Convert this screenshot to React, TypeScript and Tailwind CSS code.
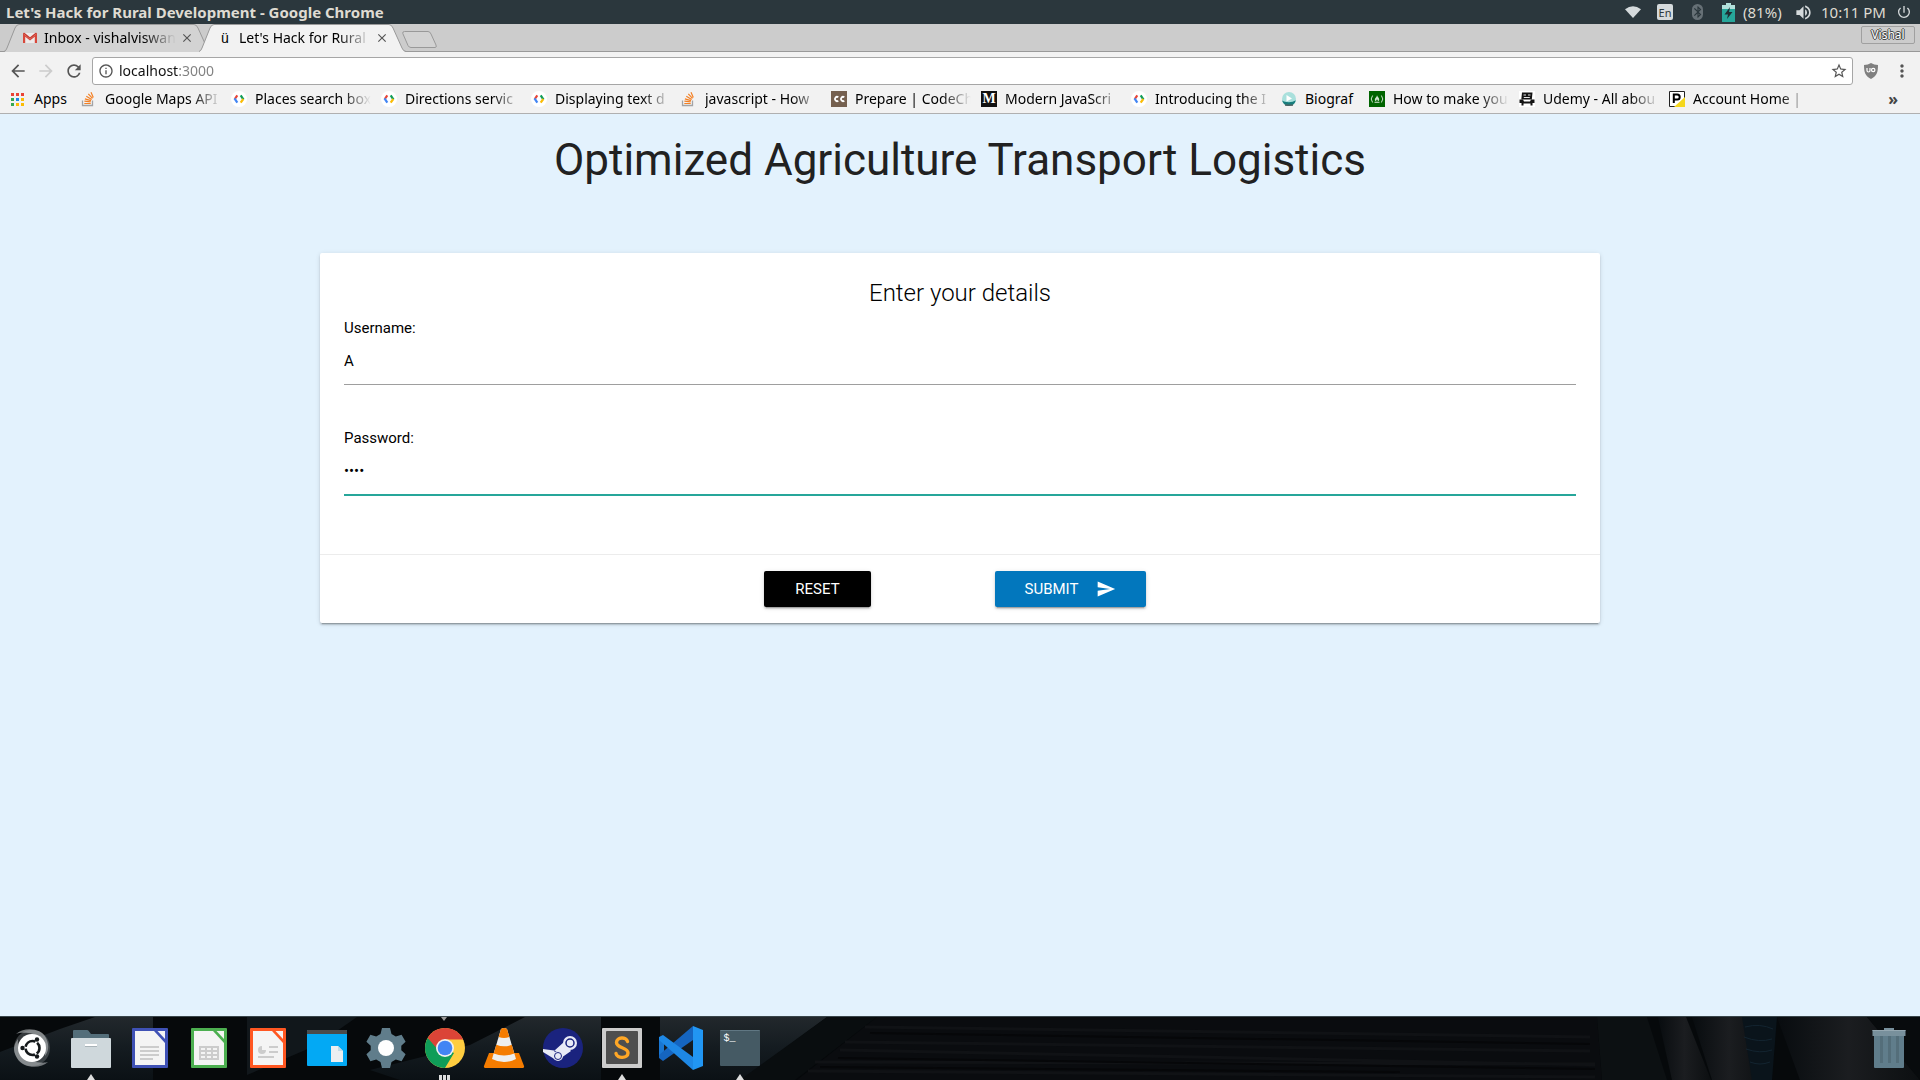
import React, { useState } from "react";
import type { ReactNode } from "react";
import {
  MdArrowBack,
  MdArrowForward,
  MdBluetooth,
  MdClose,
  MdInfoOutline,
  MdMoreVert,
  MdPowerSettingsNew,
  MdRefresh,
  MdSend,
  MdStarBorder,
  MdVolumeUp,
} from "react-icons/md";

/* ---------- Favicons ---------- */

const GmailIcon = () => (
  <svg viewBox="0 0 16 16" className="size-4 shrink-0" aria-hidden="true">
    <path d="M2 3h12v10H2z" fill="#eceaea" />
    <path d="M1 3.5 8 9l7-5.500V13h-2.200V6.800L8 10.600 3.200 6.800V13H1z" fill="#d8483b" />
    <path d="M1 3.500C1 2.600 2 2.400 2.700 3L8 7.200 13.300 3C14 2.400 15 2.600 15 3.500L8 9z" fill="#c9392d" />
  </svg>
);

const StackIcon = () => (
  <svg viewBox="0 0 16 16" className="size-4 shrink-0" fill="none" aria-hidden="true">
    <path d="M1.500 9.500v5h10v-5" stroke="#a3a3a5" strokeWidth="1.300" />
    <path
      d="M3.300 12.500h6.400M3.400 10.200l6.300.700M3.900 7.800l6.100 1.800M5.300 5.300l5.400 3.200M7.300 2.800l4.200 4.600M10 1.300l2.300 5.300"
      stroke="#f48024"
      strokeWidth="1.200"
    />
  </svg>
);

const GoogleDevIcon = () => (
  <svg viewBox="0 0 16 16" className="size-4 shrink-0" fill="none" aria-hidden="true">
    <circle cx="8" cy="8" r="8" fill="#fff" />
    <path d="M6.300 4.300 3.800 8" stroke="#ea4335" strokeWidth="2.200" />
    <path d="M3.500 7.300l2.800 4.400" stroke="#4285f4" strokeWidth="2.200" />
    <path d="M9.700 4.300 12.500 8.600" stroke="#109d58" strokeWidth="2.200" />
    <path d="M12.300 8 9.700 11.700" stroke="#fbbc05" strokeWidth="2.200" />
  </svg>
);

const CodeChefIcon = () => (
  <svg viewBox="0 0 16 16" className="size-4 shrink-0" fill="none" aria-hidden="true">
    <path d="M0 0h16v16H0z" fill="#75604f" />
    <path d="M7.300 6.300a2.100 2.100 0 1 0 0 3.400M13.300 6.300a2.100 2.100 0 1 0 0 3.400" stroke="#fff" strokeWidth="1.800" />
  </svg>
);

const MediumIcon = () => (
  <span className="flex size-4 shrink-0 items-center justify-center bg-[#111] font-['Liberation_Serif',serif] text-sm leading-none font-bold text-white">
    M
  </span>
);

const BiografIcon = () => (
  <svg viewBox="0 0 16 16" className="size-4 shrink-0" aria-hidden="true">
    <circle cx="8" cy="8" r="7" fill="#a9e0dc" />
    <path d="M1.200 9.500C4 11.500 11 12 14.800 9.300 14 13 11 15 8 15s-6-2-6.800-5.500z" fill="#187d7c" />
    <path d="M5.500 4v6.500L11 7.500z" fill="#fff" />
    <path d="M4 13.500h8v1.300H4z" fill="#55605f" />
  </svg>
);

const FreeCodeCampIcon = () => (
  <svg viewBox="0 0 16 16" className="size-4 shrink-0" fill="none" aria-hidden="true">
    <path d="M0 0h16v16H0z" fill="#006400" />
    <path d="M3.600 4.500Q.800 8 3.600 11.500M12.400 4.500Q15.200 8 12.400 11.500M5.500 11.300h5" stroke="#cfe3cf" strokeWidth="1" />
    <path d="M8 4.300c.300 1.700 2.200 2.300 2.200 4.200 0 1-.800 1.800-1.500 2 .5-1-.2-1.700-.7-2.200-.3.800-1.200 1.200-.7 2.200-.8-.2-1.500-1-1.500-2C5.800 6.900 8 6.300 8 4.300z" fill="#cfe3cf" />
  </svg>
);

const LaptopFaceIcon = () => (
  <svg viewBox="0 0 16 16" className="size-4 shrink-0" aria-hidden="true">
    <path d="M0 0h16v16H0z" fill="#fff" />
    <path d="M3 1.500h10.500l-.7 7H2.300z" fill="#141414" />
    <path d="M4.500 4h2.500M9 4h2.500M4.800 6.500h6" stroke="#fff" strokeWidth=".9" />
    <path d="M.5 8.500H4l1 2h6l1-2h3.500v3.500h-2v2.500h-2V12.500h-7v2h-2V12h-2z" fill="#141414" />
  </svg>
);

const ParkingIcon = () => (
  <svg viewBox="0 0 16 16" className="size-4 shrink-0" aria-hidden="true">
    <path d="M.5.5h15v15H.5z" fill="#fff" stroke="#222" />
    <path d="M16 6v10H5z" fill="#f5d71c" />
    <path d="M4.800 12V3.500h3.400a2.400 2.400 0 0 1 0 5H4.800" fill="none" stroke="#000" strokeWidth="2" />
  </svg>
);

const AppsIcon = () => (
  <svg viewBox="0 0 13 13" className="size-[13px] shrink-0" aria-hidden="true">
    <path d="M0 0h3v3H0zM5 0h3v3H5zM10 0h3v3h-3z" fill="#ea4335" />
    <path d="M0 5h3v3H0z" fill="#34a853" />
    <path d="M5 5h3v3H5z" fill="#1e88e5" />
    <path d="M10 5h3v3h-3zM5 10h3v3H5zM10 10h3v3h-3z" fill="#fbbc05" />
    <path d="M0 10h3v3H0z" fill="#34a853" />
  </svg>
);

/* ---------- System bar ---------- */

const SystemBar = () => (
  <header className="flex h-6 items-center justify-between bg-[#2b373d] pr-2 pl-1.5 text-[#dfdbd2]">
    <h1 className="text-[15px] leading-6 font-bold whitespace-nowrap">Let's Hack for Rural Development - Google Chrome</h1>
    <div className="flex items-center text-[15px] leading-6 whitespace-nowrap">
      <svg viewBox="0 0 16 12" className="mr-4 h-3 w-4" fill="#d5dadc" role="img" aria-label="Wi-Fi">
        <path d="M8 12 0 3.200Q8-2.800 16 3.200z" />
      </svg>
      <span className="mr-[19px] flex size-4 items-center justify-center rounded-[2px] bg-[#d5dadc] text-[11px] leading-none text-[#2b373d]">
        En
      </span>
      <span className="mr-[19px] flex h-4 w-[11px] items-center justify-center rounded-full bg-[#667076]">
        <MdBluetooth className="size-3.5 shrink-0 text-[#2b373d]" />
      </span>
      <svg viewBox="0 0 13 19" className="mr-2 h-[19px] w-[13px]" role="img" aria-label="Battery">
        <path d="M4 0h5v2h4v17H0V2h4z" fill="#26a69a" />
        <path d="M4 0h5v2h4v4H0V2h4z" fill="#b2dfdb" />
        <path d="M8 4 2.500 11.500H6L5 16l5.500-7H7z" fill="#1f2d33" />
      </svg>
      <span className="w-[39px]">(81%)</span>
      <MdVolumeUp className="mr-2 ml-3 size-[19px] text-[#d5dadc]" />
      <span className="w-[65px]">10:11 PM</span>
      <MdPowerSettingsNew className="ml-2.5 size-4 text-[#d5dadc]" />
    </div>
  </header>
);

/* ---------- Browser chrome ---------- */

type TabProps = { title: string; icon: ReactNode; active?: boolean };

const Tab = ({ title, icon, active = false }: TabProps) => (
  <div className={active ? "relative z-10 -ml-3 h-7 w-[207px]" : "relative h-7 w-[207px]"}>
    <svg viewBox="0 0 207 28" className="absolute inset-0 h-7 w-full" aria-hidden="true">
      <path
        d="M0 28Q2 27 3 24L11 4Q12.500.500 15 .5H190Q192.500.500 194 4L203 24Q204 27 207 28z"
        fill={active ? "#f2f2f2" : "#d3d3d3"}
      />
      <path
        d="M0 27.500Q2 27 3 24L11 4Q12.500.500 15 .5H190Q192.500.500 194 4L203 24Q204 27 207 27.500"
        fill="none"
        stroke="#999"
      />
    </svg>
    <div className="relative flex h-7 items-center pr-[17px] pl-[18px]">
      <span className="flex w-[22px] shrink-0 items-center">{icon}</span>
      <button
        role="tab"
        aria-selected={active}
        className="min-w-0 flex-1 overflow-hidden text-left text-sm leading-6 whitespace-nowrap text-black [mask-image:linear-gradient(to_right,#000_75%,transparent)]"
      >
        {title}
      </button>
      <button aria-label={`Close ${title}`} className="ml-1 shrink-0 text-[#555]">
        <MdClose className="size-3.5" />
      </button>
    </div>
  </div>
);

const TabStrip = () => (
  <div className="flex h-7 items-start justify-between bg-[#ccc] shadow-[inset_0_-1px_0_#999]">
    <div role="tablist" className="flex pl-1">
      <Tab title="Inbox - vishalviswan" icon={<GmailIcon />} />
      <Tab
        active
        title="Let's Hack for Rural"
        icon={<span className="w-4 text-center font-['Liberation_Sans',sans-serif] text-sm leading-none">ü</span>}
      />
      <button aria-label="New tab" className="mt-[7px] -ml-1 h-[17px] w-[35px]">
        <svg viewBox="0 0 35 17" className="h-full w-full" aria-hidden="true">
          <path d="M2.500.500H26Q28 .5 29 3L34 14Q35 16.500 33 16.500H9Q7 16.500 6 14.500L.8 2.500Q.3.500 2.500.500z" fill="#d2d2d2" stroke="#999" />
        </svg>
      </button>
    </div>
    <button className="mt-0.5 mr-[5px] h-[18px] w-[54px] rounded-[2px] border border-[#a0a0a0] text-xs leading-4 text-white [text-shadow:1px_0_#444,-1px_0_#444,0_1px_#444,0_-1px_#444]">
      Vishal
    </button>
  </div>
);

const Toolbar = () => {
  const [address, setAddress] = useState("localhost:3000");
  return (
    <div className="flex h-[38px] items-center bg-[#f2f2f2] px-2 text-[#555]">
      <button aria-label="Back" className="mr-2">
        <MdArrowBack className="size-5" />
      </button>
      <button aria-label="Forward" disabled className="mr-2 text-[#ccc]">
        <MdArrowForward className="size-5" />
      </button>
      <button aria-label="Reload" className="mr-2">
        <MdRefresh className="size-5" />
      </button>
      <div className="flex h-7 min-w-0 flex-1 items-center rounded-[3px] border border-[#a6a6a6] bg-white pr-1 pl-[5px]">
        <MdInfoOutline className="mr-1 size-4 shrink-0" />
        <input
          aria-label="Address"
          value={address}
          onChange={(event) => setAddress(event.target.value)}
          spellCheck={false}
          className="min-w-0 flex-1 bg-[linear-gradient(to_right,#111_60px,#808080_60px)] bg-clip-text pl-px text-sm leading-6 text-transparent caret-black outline-none"
        />
        <button aria-label="Bookmark this page">
          <MdStarBorder className="size-[18px]" />
        </button>
      </div>
      <button aria-label="Shield extension" className="mr-3.5 ml-[11px]">
        <svg viewBox="0 0 14 16" className="h-4 w-3.5" fill="none" aria-hidden="true">
          <path d="M7 0q3 2 7 2c0 7-1 11-7 14C1 13 0 9 0 2q4 0 7-2z" fill="#808080" />
          <path d="M3 5v2.500a1.500 1.500 0 0 0 3 0V5" stroke="#fff" strokeWidth="1.200" />
          <circle cx="9.200" cy="7" r="1.700" stroke="#fff" strokeWidth="1.200" />
        </svg>
      </button>
      <button aria-label="Menu">
        <MdMoreVert className="size-5" />
      </button>
    </div>
  );
};

const bookmarks: { label: string; icon: ReactNode; short?: boolean }[] = [
  { label: "Google Maps API", icon: <StackIcon /> },
  { label: "Places search box", icon: <GoogleDevIcon /> },
  { label: "Directions servic", icon: <GoogleDevIcon /> },
  { label: "Displaying text d", icon: <GoogleDevIcon /> },
  { label: "javascript - How", icon: <StackIcon /> },
  { label: "Prepare | CodeCh", icon: <CodeChefIcon /> },
  { label: "Modern JavaScri", icon: <MediumIcon /> },
  { label: "Introducing the I", icon: <GoogleDevIcon /> },
  { label: "Biograf", icon: <BiografIcon />, short: true },
  { label: "How to make you", icon: <FreeCodeCampIcon /> },
  { label: "Udemy - All abou", icon: <LaptopFaceIcon /> },
  { label: "Account Home |", icon: <ParkingIcon /> },
];

const BookmarksBar = () => (
  <nav
    aria-label="Bookmarks"
    className="flex h-6 items-start border-b border-[#b0b0b0] bg-[#f2f2f2] pr-[22px] pl-[11px] text-sm leading-[18px] whitespace-nowrap text-black"
  >
    <a href="#apps" className="flex w-[70px] shrink-0 items-center gap-2.5">
      <AppsIcon />
      Apps
    </a>
    <div className="flex min-w-0 flex-1 overflow-hidden">
      {bookmarks.map(({ label, icon, short }) => (
        <a
          key={label}
          href="#bookmark"
          className={
            short
              ? "flex w-[88px] shrink-0 items-center gap-2"
              : "flex w-[150px] shrink-0 items-center gap-2 pr-2.5"
          }
        >
          {icon}
          <span
            className={
              short
                ? "shrink-0"
                : "min-w-0 flex-1 overflow-hidden [mask-image:linear-gradient(to_right,#000_75%,transparent)]"
            }
          >
            {label}
          </span>
        </a>
      ))}
    </div>
    <button aria-label="More bookmarks" className="text-base leading-[18px] font-bold text-[#444]">
      »
    </button>
  </nav>
);

/* ---------- Page ---------- */

const LoginCard = () => {
  const [username, setUsername] = useState("A");
  const [password, setPassword] = useState("1234");
  const reset = () => {
    setUsername("");
    setPassword("");
  };
  return (
    <form
      onSubmit={(event) => event.preventDefault()}
      className="mx-auto w-2/3 rounded-[2px] bg-white text-[15px] text-black shadow-[0_2px_2px_0_rgba(0,0,0,0.14),0_1px_5px_0_rgba(0,0,0,0.12),0_3px_1px_-2px_rgba(0,0,0,0.2)]"
    >
      <div className="px-6 pt-6 pb-[58px]">
        <h3 className="mb-2 text-center text-2xl leading-8 font-light">Enter your details</h3>
        <label htmlFor="username" className="block leading-[22px]">
          Username:
        </label>
        <input
          id="username"
          type="text"
          value={username}
          onChange={(event) => setUsername(event.target.value)}
          className="mb-[42px] block h-[46px] w-full border-b border-[#9e9e9e] pb-0.5 outline-none"
        />
        <label htmlFor="password" className="block leading-[22px]">
          Password:
        </label>
        <input
          id="password"
          type="password"
          value={password}
          onChange={(event) => setPassword(event.target.value)}
          className="block h-[47px] w-full border-b-2 border-[#26a69a] pb-0.5 outline-none"
        />
      </div>
      <div className="flex justify-center gap-[124px] border-t border-[rgba(160,160,160,0.2)] py-4 pr-[34px] pl-6 text-white">
        <button
          type="button"
          onClick={reset}
          className="h-9 w-[107px] rounded-[2px] bg-black uppercase shadow-[0_2px_2px_0_rgba(0,0,0,0.14),0_1px_5px_0_rgba(0,0,0,0.12),0_3px_1px_-2px_rgba(0,0,0,0.2)]"
        >
          Reset
        </button>
        <button
          type="submit"
          className="flex h-9 w-[151px] items-center justify-center gap-[18px] rounded-[2px] bg-[#0277bd] uppercase shadow-[0_2px_2px_0_rgba(0,0,0,0.14),0_1px_5px_0_rgba(0,0,0,0.12),0_3px_1px_-2px_rgba(0,0,0,0.2)]"
        >
          Submit
          <MdSend className="size-5" />
        </button>
      </div>
    </form>
  );
};

/* ---------- Dock ---------- */

const LauncherIcon = () => (
  <svg viewBox="0 0 48 48" className="size-12" fill="none">
    <circle cx="24" cy="24" r="18" fill="#8b9194" opacity=".35" />
    <path d="M8 10C15 3 33 3 38 14c4 8 2 14-1 18 1-12-3-19-12-22C17 8 11 9 8 10z" fill="#c4c8ca" opacity=".55" />
    <path d="M40 38C33 45 15 45 9 34 4 26 6 20 10 15c-1 12 3 19 13 22 8 2 14 2 17 1z" fill="#c4c8ca" opacity=".55" />
    <circle cx="24" cy="24" r="14" fill="#fff" />
    <circle cx="24.500" cy="24" r="7" stroke="#15191b" strokeWidth="2.600" strokeDasharray="12.700 2" strokeDashoffset="6.300" />
    <circle cx="14.500" cy="24" r="2.200" fill="#15191b" />
    <circle cx="29" cy="15.500" r="2.200" fill="#15191b" />
    <circle cx="29" cy="32.500" r="2.200" fill="#15191b" />
  </svg>
);

const FilesIcon = () => (
  <svg viewBox="0 0 48 48" className="size-12">
    <path d="M6 7q0-1 1-1h13q1 0 1.500.800L24 10h17q1 0 1 1v9H6z" fill="#546e7a" />
    <path d="M5 14h38q1 0 1 1v28q0 1-1 1H5q-1 0-1-1V15q0-1 1-1z" fill="#cfd8dc" />
    <path d="M18 20h12v2.500H18z" fill="#fff" />
    <path d="M18 22h12v1H18z" fill="#a9b3b8" />
  </svg>
);

const OfficeIcon = ({ color, children }: { color: string; children: ReactNode }) => (
  <svg viewBox="0 0 48 48" className="size-12">
    <rect x="6" y="4" width="36" height="40" rx="1" fill={color} />
    <path d="M9 7h19l11 12v22H9z" fill="#f4f4f4" />
    <path d="M31.500 7H39v8z" fill="#f4f4f4" />
    {children}
  </svg>
);

const WindowFileIcon = () => (
  <svg viewBox="0 0 48 48" className="size-12">
    <rect x="4" y="6" width="40" height="36" rx="1" fill="#03a9f4" />
    <path d="M4 7q0-1 1-1h38q1 0 1 1v3H4z" fill="#4b4b4b" />
    <path d="M28 22h7l5 5v11H28z" fill="#eceff1" />
    <path d="M35 22l5 5h-5z" fill="#c3dbe6" />
  </svg>
);

const SettingsIcon = () => (
  <svg viewBox="0 0 48 48" className="size-12">
    <path
      d="M20 4h8l1.500 6 4.300 2.400 5.800-1.700 4 7-4.300 4.100v4.400l4.300 4.100-4 7-5.800-1.700L29.500 38 28 44h-8l-1.500-6-4.300-2.400-5.800 1.700-4-7 4.300-4.100v-4.400l-4.300-4.100 4-7 5.800 1.700L18.500 10z"
      fill="#607d8b"
    />
    <circle cx="24" cy="24" r="8" fill="#fff" />
  </svg>
);

const ChromeIcon = () => (
  <svg viewBox="0 0 48 48" className="size-12">
    <circle cx="24" cy="24" r="20" fill="#ffcd40" />
    <path d="M24 24 6.700 14A20 20 0 0 0 24 44l9-15z" fill="#0f9d58" />
    <path d="M6.700 14A20 20 0 0 1 42.200 15.500H24l-9 8z" fill="#db4437" />
    <circle cx="24" cy="24" r="9" fill="#f1f1f1" />
    <circle cx="24" cy="24" r="7.300" fill="#4285f4" />
  </svg>
);

const VlcIcon = () => (
  <svg viewBox="0 0 48 48" className="size-12">
    <path d="M9 29h30l5 13q.5 2-1.500 2h-37Q3.500 44 4 42z" fill="#f57c00" />
    <path d="M21 5q3-2 6 0l9 30q-12 6-24 0z" fill="#eee" />
    <path d="M21 5q3-2 6 0l2.300 8q-5.300 2-10.600 0zM16.300 20.800q7.700 3 15.400 0l2.600 8.700q-10.300 4-20.600 0z" fill="#f57c00" />
  </svg>
);

const SteamIcon = () => (
  <svg viewBox="0 0 48 48" className="size-12">
    <circle cx="24" cy="24" r="20" fill="#1a237e" />
    <path d="M4 25v3l13 8 4-8-6-1.500zM15 27 25 18l7 9-10 7z" fill="#e8eaf6" />
    <circle cx="19" cy="32" r="5" fill="#e8eaf6" />
    <circle cx="19" cy="32" r="3.500" fill="none" stroke="#1a237e" strokeWidth="1" />
    <circle cx="31" cy="19" r="7" fill="#e8eaf6" />
    <circle cx="31" cy="19" r="4" fill="#e8eaf6" stroke="#1a237e" strokeWidth="1.500" />
  </svg>
);

const SublimeIcon = () => (
  <svg viewBox="0 0 48 48" className="size-12">
    <rect x="4" y="4" width="40" height="40" rx="1" fill="#ccc" />
    <rect x="8" y="7" width="32" height="33" rx="1" fill="#4e4e4e" />
    <path
      d="M29.500 17.500C28.500 12.500 18.500 13 18.500 18.500c0 6 11.500 4.500 11.500 10.500 0 5.500-11 6-12 .5"
      fill="none"
      stroke="#ffa726"
      strokeWidth="3.400"
      strokeLinecap="round"
    />
  </svg>
);

const VsCodeIcon = () => (
  <svg viewBox="0 0 48 48" className="size-12">
    <path d="M2 13l5 4v14l-5 3z" fill="#1976d2" />
    <path d="M36 2v14L6 37l-4-3v-3z" fill="#1565c0" />
    <path d="M2 13 6 11 36 33V46L2 16z" fill="#1e88e5" />
    <path d="M36 2l10 4v36l-10 4z" fill="#2196f3" />
  </svg>
);

const TerminalIcon = () => (
  <span className="flex size-12 items-center justify-center">
    <span className="h-9 w-10 rounded-[1px] border-t border-[#607783] bg-[#455a64] px-1 pt-0.5 text-left font-['Liberation_Mono',monospace] text-[10px] leading-3 text-white">
      $_
    </span>
  </span>
);

const TrashIcon = () => (
  <svg viewBox="0 0 48 48" className="size-12">
    <path d="M19 4h10v3H19z" fill="#78909c" />
    <path d="M9 12h30v31q0 1-1 1H10q-1 0-1-1z" fill="#607d8b" />
    <path d="M7.500 6h33v6h-33z" fill="#78909c" />
    <path d="M7.500 6h33v1h-33z" fill="#94a7b1" />
    <path d="M15 12h3v27h-3zM23 12h3v27h-3zM31 12h3v27h-3z" fill="#546e7a" />
  </svg>
);

const apps: { name: string; icon: ReactNode; windows?: number; focused?: boolean }[] = [
  { name: "Show applications", icon: <LauncherIcon /> },
  { name: "Files", icon: <FilesIcon />, windows: 1 },
  {
    name: "Writer",
    icon: (
      <OfficeIcon color="#3f51b5">
        <path d="M14 22h19v2H14zM14 26h19v2H14zM14 30h19v2H14zM14 34h13v2H14z" fill="#ccc" />
      </OfficeIcon>
    ),
  },
  {
    name: "Calc",
    icon: (
      <OfficeIcon color="#4caf50">
        <path d="M14 22h20v14H14z" fill="#ccc" />
        <path d="M16 24h4v2h-4zM22 24h4v2h-4zM28 24h4v2h-4zM16 28h4v2h-4zM22 28h4v2h-4zM28 28h4v2h-4zM16 32h4v2h-4zM22 32h4v2h-4zM28 32h4v2h-4z" fill="#f4f4f4" />
      </OfficeIcon>
    ),
  },
  {
    name: "Impress",
    icon: (
      <OfficeIcon color="#ff5722">
        <path d="M18 22v4h4a4 4 0 1 1-4-4zM25 22h9v2h-9zM25 27h9v2h-9zM14 32h16v2H14z" fill="#ccc" />
      </OfficeIcon>
    ),
  },
  { name: "Software", icon: <WindowFileIcon /> },
  { name: "Settings", icon: <SettingsIcon /> },
  { name: "Chrome", icon: <ChromeIcon />, windows: 3, focused: true },
  { name: "VLC", icon: <VlcIcon /> },
  { name: "Steam", icon: <SteamIcon /> },
  { name: "Sublime Text", icon: <SublimeIcon />, windows: 1 },
  { name: "Visual Studio Code", icon: <VsCodeIcon /> },
  { name: "Terminal", icon: <TerminalIcon />, windows: 1 },
];

const Wallpaper = () => (
  <svg viewBox="0 0 1920 63" preserveAspectRatio="none" className="absolute inset-0 h-full w-full" aria-hidden="true">
    <defs>
      <linearGradient id="rock" x1="0" x2="0" y1="0" y2="1">
        <stop offset="0" stopColor="#22282c" />
        <stop offset=".5" stopColor="#141b20" />
        <stop offset="1" stopColor="#0b1115" />
      </linearGradient>
      <linearGradient id="plank" x1="0" x2="1" y1="0" y2="0">
        <stop offset="0" stopColor="#080c0f" />
        <stop offset=".5" stopColor="#1b1d20" />
        <stop offset="1" stopColor="#0c0f11" />
      </linearGradient>
    </defs>
    <path d="M0 0h1920v63H0z" fill="#06090b" />
    <path d="M0 35 60 12 95 0h58v63H0z" fill="url(#rock)" />
    <path d="M247 0h110l-40 28-70 30z" fill="#11171b" />
    <path d="M470 28 525 0h76v63H400l-30-10z" fill="url(#rock)" />
    <path d="M660 0h167l-85 63H660z" fill="url(#rock)" />
    <path d="M827 0h50l-82 63h-55z" fill="#090d0f" />
    <path d="M877 0h720l5 63H797z" fill="#0a0c0f" />
    <path d="M865 10 1590 20M845 25 1590 34M840 33 1595 48M815 45 1595 47M808 54 1595 60" stroke="#101215" strokeWidth="3" fill="none" />
    <path d="M870 16 1590 27M838 41 1595 52M820 50 1400 55" stroke="#060709" strokeWidth="2" fill="none" />
    <path d="M1597 0h50l20 63h-65z" fill="#0c1012" />
    <path d="M1658 0h28l25 63h-39z" fill="url(#plank)" />
    <path d="M1692 0h52l22 63h-54z" fill="url(#plank)" />
    <path d="M1742 0h35l-5 63h-20z" fill="#0a141b" />
    <path d="M1745 10q15-4 28 2M1744 20q15 6 28 2M1746 32q14 5 26 1M1750 45q10 4 20 0" stroke="#132430" strokeWidth="1" fill="none" />
    <path d="M1777 0h90l53 63h-120z" fill="url(#plank)" />
    <path d="M1867 0h53v63z" fill="#080b0d" />
  </svg>
);

const Dock = () => (
  <footer className="relative border-t border-[#39454a] bg-[#06090b]">
    <Wallpaper />
    <div className="relative flex h-[63px] justify-between pr-[7px] pl-0.5">
      <div className="flex">
        {apps.map(({ name, icon, windows = 0, focused }) => (
          <button key={name} aria-label={name} className="relative flex h-full w-[59px] justify-center pt-[7px]">
            {icon}
            {focused && (
              <svg viewBox="0 0 6 4" className="absolute top-0 left-[26px] h-1 w-1.5">
                <path d="M0 0h6L3 4z" fill="#999" />
              </svg>
            )}
            {windows === 1 && (
              <svg viewBox="0 0 8 6" className="absolute bottom-0 left-[26px] h-1.5 w-2">
                <path d="M4 0 8 6H0z" fill="#ddd" />
              </svg>
            )}
            {windows > 1 && (
              <svg viewBox="0 0 11 5" className="absolute bottom-0 left-6 h-[5px] w-[11px]">
                <path d="M0 0h3v5H0zM4 0h3v5H4zM8 0h3v5H8z" fill="#ddd" />
              </svg>
            )}
          </button>
        ))}
      </div>
      <button aria-label="Trash" className="flex h-full justify-center pt-[7px]">
        <TrashIcon />
      </button>
    </div>
  </footer>
);

export default function App() {
  return (
    <div className="flex min-h-screen flex-col font-['Noto_Sans',sans-serif]">
      <SystemBar />
      <TabStrip />
      <Toolbar />
      <BookmarksBar />
      <main className="flex-1 bg-[#e3f2fd] font-[Roboto,sans-serif]">
        <h2 className="pt-[22px] pb-[69px] text-center text-[44px] leading-[48px] text-[#212121]">
          Optimized Agriculture Transport Logistics
        </h2>
        <LoginCard />
      </main>
      <Dock />
    </div>
  );
}
